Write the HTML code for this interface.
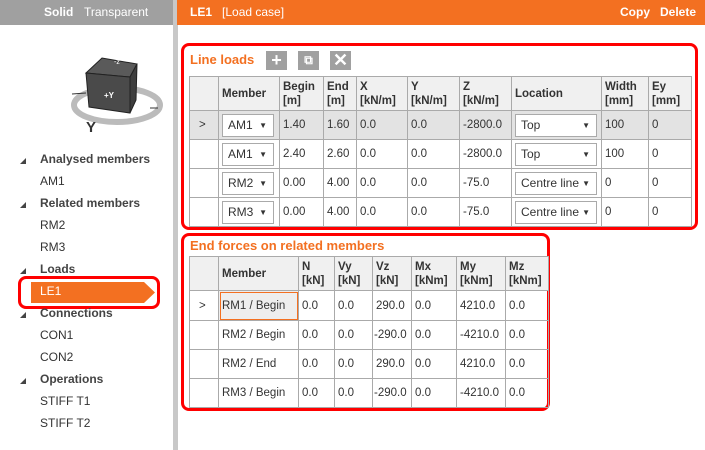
<!DOCTYPE html>
<html><head><meta charset="utf-8"><style>
*{box-sizing:border-box;margin:0;padding:0}
body{width:705px;height:450px;overflow:hidden;background:#fff;font-family:"Segoe UI","Liberation Sans",sans-serif;font-size:12px;color:#333;position:relative}
.a{position:absolute}
.tri{position:absolute;left:20px;width:0;height:0;border-left:6px solid transparent;border-bottom:6px solid #444}
.lbl{position:absolute;left:40px;font-size:12px;color:#333}
table{border-collapse:collapse;position:absolute;table-layout:fixed;font-size:11.5px}
td,th{border:1px solid #aaa;padding:0 0 0 3px;text-align:left;vertical-align:middle;white-space:nowrap;overflow:hidden}
th{background:#f0f0f0;font-weight:bold;color:#333;line-height:14px}
.sel{background:#e3e3e3}
.dd{display:inline-block;border:1px solid #aaa;background:#fff;height:23px;line-height:21px;padding-left:5px;position:relative;vertical-align:middle;font-size:12px}
.dd:after{content:"▼";position:absolute;right:6px;top:0;font-size:8px;color:#333}
.rb{position:absolute;border:3px solid #f00;border-radius:8px}
.ttl{position:absolute;color:#f37021;font-weight:bold;font-size:13px}
.ib{position:absolute;top:51px;width:21px;height:19px;background:#a0a0a0;color:#fff;text-align:center;font-weight:bold;line-height:19px;font-size:18px}
</style></head><body>
<div class="a" style="left:0;top:0;width:173px;height:25px;background:#a0a0a0"></div>
<div class="a" style="left:44px;top:5px;color:#fff;font-weight:bold">Solid</div>
<div class="a" style="left:84px;top:5px;color:#fff">Transparent</div>
<div class="a" style="left:173px;top:0;width:5px;height:450px;background:#c8c8c8"></div>
<div class="a" style="left:177px;top:0;width:528px;height:25px;background:#f37021"></div>
<div class="a" style="left:190px;top:5px;color:#fff"><b>LE1</b>&nbsp;&nbsp;&nbsp;[Load case]</div>
<div class="a" style="left:620px;top:5px;color:#fff;font-weight:bold">Copy&nbsp;&nbsp;&nbsp;Delete</div>

<svg class="a" style="left:0;top:40px" width="173" height="100">
<ellipse cx="117" cy="65" rx="43" ry="17" fill="none" stroke="#bbb" stroke-width="6"/>
<polygon points="86,33 102,18 137,24 130,37" fill="#5a5a5a" stroke="#222"/>
<polygon points="86,33 130,37 130,73 89,67" fill="#4a4a4a" stroke="#222"/>
<polygon points="130,37 137,24 136,60 130,73" fill="#3e3e3e" stroke="#222"/>
<text x="104" y="58" fill="#fff" font-size="8" font-weight="bold">+Y</text>
<text x="114" y="24" fill="#fff" font-size="7">-z</text>
<text x="86" y="92" fill="#333" font-size="15" font-weight="bold">Y</text>
<line x1="72" y1="54" x2="86" y2="53" stroke="#333"/><line x1="150" y1="68" x2="158" y2="68" stroke="#333"/>
</svg>

<div class="tri" style="top:158px"></div><div class="lbl" style="top:152px;font-weight:bold;color:#444">Analysed members</div>
<div class="lbl" style="top:174px">AM1</div>
<div class="tri" style="top:202px"></div><div class="lbl" style="top:196px;font-weight:bold;color:#444">Related members</div>
<div class="lbl" style="top:218px">RM2</div>
<div class="lbl" style="top:240px">RM3</div>
<div class="tri" style="top:268px"></div><div class="lbl" style="top:262px;font-weight:bold;color:#444">Loads</div>
<svg class="a" style="left:31px;top:282px" width="125" height="21"><polygon points="0,0 113,0 124,10.5 113,21 0,21" fill="#f37021"/></svg>
<div class="lbl" style="top:284px;color:#fff">LE1</div>
<div class="rb" style="left:18px;top:276px;width:142px;height:33px"></div>
<div class="tri" style="top:312px"></div><div class="lbl" style="top:306px;font-weight:bold;color:#444">Connections</div>
<div class="lbl" style="top:328px">CON1</div>
<div class="lbl" style="top:350px">CON2</div>
<div class="tri" style="top:378px"></div><div class="lbl" style="top:372px;font-weight:bold;color:#444">Operations</div>
<div class="lbl" style="top:394px">STIFF T1</div>
<div class="lbl" style="top:416px">STIFF T2</div>

<div class="rb" style="left:181px;top:43px;width:517px;height:187px"></div>
<div class="ttl" style="left:190px;top:52px">Line loads</div>
<div class="ib" style="left:266px">+</div>
<div class="ib" style="left:298px;font-size:12px">⧉</div>
<div class="ib" style="left:330px">✕</div>
<table style="left:189px;top:76px;width:502px">
<colgroup><col style="width:29px"><col style="width:61px"><col style="width:44px"><col style="width:33px"><col style="width:51px"><col style="width:52px"><col style="width:52px"><col style="width:90px"><col style="width:47px"><col style="width:43px"></colgroup>
<tr style="height:34px"><th></th><th>Member</th><th>Begin<br>[m]</th><th>End<br>[m]</th><th>X<br>[kN/m]</th><th>Y<br>[kN/m]</th><th>Z<br>[kN/m]</th><th>Location</th><th>Width<br>[mm]</th><th>Ey<br>[mm]</th></tr>
<tr style="height:29px" class="sel"><td style="padding-left:9px">&gt;</td><td style="padding-left:3px"><span class="dd" style="width:52px">AM1</span></td><td>1.40</td><td>1.60</td><td>0.0</td><td>0.0</td><td>-2800.0</td><td style="padding-left:3px"><span class="dd" style="width:82px">Top</span></td><td>100</td><td>0</td></tr>
<tr style="height:29px"><td></td><td style="padding-left:3px"><span class="dd" style="width:52px">AM1</span></td><td>2.40</td><td>2.60</td><td>0.0</td><td>0.0</td><td>-2800.0</td><td style="padding-left:3px"><span class="dd" style="width:82px">Top</span></td><td>100</td><td>0</td></tr>
<tr style="height:29px"><td></td><td style="padding-left:3px"><span class="dd" style="width:52px">RM2</span></td><td>0.00</td><td>4.00</td><td>0.0</td><td>0.0</td><td>-75.0</td><td style="padding-left:3px"><span class="dd" style="width:82px">Centre line</span></td><td>0</td><td>0</td></tr>
<tr style="height:29px"><td></td><td style="padding-left:3px"><span class="dd" style="width:52px">RM3</span></td><td>0.00</td><td>4.00</td><td>0.0</td><td>0.0</td><td>-75.0</td><td style="padding-left:3px"><span class="dd" style="width:82px">Centre line</span></td><td>0</td><td>0</td></tr>
</table>

<div class="rb" style="left:181px;top:233px;width:369px;height:178px"></div>
<div class="ttl" style="left:190px;top:238px">End forces on related members</div>
<table style="left:189px;top:256px;width:359px">
<colgroup><col style="width:29px"><col style="width:80px"><col style="width:36px"><col style="width:38px"><col style="width:39px"><col style="width:45px"><col style="width:49px"><col style="width:43px"></colgroup>
<tr style="height:34px"><th></th><th>Member</th><th>N<br>[kN]</th><th>Vy<br>[kN]</th><th>Vz<br>[kN]</th><th>Mx<br>[kNm]</th><th>My<br>[kNm]</th><th>Mz<br>[kNm]</th></tr>
<tr style="height:30px"><td style="padding-left:9px">&gt;</td><td style="background:#eee;outline:1px solid #f37021;outline-offset:-2px">RM1 / Begin</td><td>0.0</td><td>0.0</td><td>290.0</td><td>0.0</td><td>4210.0</td><td>0.0</td></tr>
<tr style="height:29px"><td></td><td>RM2 / Begin</td><td>0.0</td><td>0.0</td><td style="padding-left:1px">-290.0</td><td>0.0</td><td>-4210.0</td><td>0.0</td></tr>
<tr style="height:29px"><td></td><td>RM2 / End</td><td>0.0</td><td>0.0</td><td>290.0</td><td>0.0</td><td>4210.0</td><td>0.0</td></tr>
<tr style="height:29px"><td></td><td>RM3 / Begin</td><td>0.0</td><td>0.0</td><td style="padding-left:1px">-290.0</td><td>0.0</td><td>-4210.0</td><td>0.0</td></tr>
</table>
</body></html>
